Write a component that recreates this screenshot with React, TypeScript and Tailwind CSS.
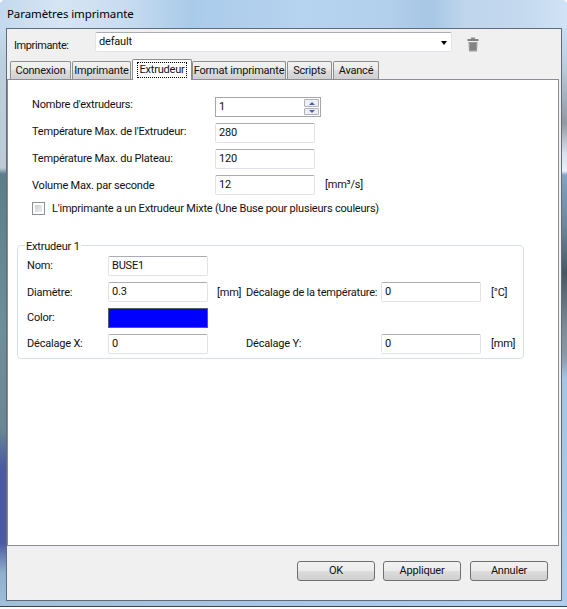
import type { ReactNode } from 'react';

const inputCls =
  'flex h-5 w-[100px] items-center rounded-[2px] border border-[#e2e3ea] border-t-[#abadb3] bg-white pl-[3px] text-[#101010]';

function Field({ value }: { value: string }) {
  return <div className={inputCls}>{value}</div>;
}

function Tab({ label, active, className }: { label: string; active?: boolean; className: string }) {
  if (active) {
    return (
      <div className={`relative z-10 -mb-px flex h-[21px] items-center justify-center whitespace-nowrap rounded-t-[2px] border border-b-0 border-[#8c8c8c] bg-white ${className}`}>
        <span className="border border-dotted border-black px-px leading-[14px]">{label}</span>
      </div>
    );
  }
  return (
    <div className={`flex h-[18px] items-center justify-center whitespace-nowrap rounded-t-[2px] border border-b-0 border-[#8e8f8f] bg-[linear-gradient(#f2f2f2,#ebebeb_45%,#dddddd_50%,#cfcfcf)] pt-px text-[#111] ${className}`}>
      {label}
    </div>
  );
}

function Row({ label, labelClass, children }: { label: string; labelClass: string; children: ReactNode }) {
  return (
    <div className="flex h-5 items-center">
      <div className={`w-[183px] ${labelClass}`}>{label}</div>
      {children}
    </div>
  );
}

function Btn({ label, className = '' }: { label: string; className?: string }) {
  return (
    <div className={`flex h-5 w-[78px] items-center justify-center rounded-[3px] border border-[#707070] bg-[linear-gradient(#f2f2f2,#ebebeb_48%,#dddddd_52%,#cfcfcf)] text-[#111] ${className}`}>
      {label}
    </div>
  );
}

export default function App() {
  return (
    <div className="flex h-[609px] w-[567px] flex-col overflow-hidden bg-white font-['Roboto',sans-serif] text-[11px] tracking-[-0.2px] text-[#111]">
      <div className="flex h-[607px] flex-col rounded-t-[5px] bg-[#a9c8e6]">
        {/* title bar */}
        <div className="flex h-[28px] items-center rounded-t-[5px] bg-[linear-gradient(90deg,#c4d9ee,#d6e5f4_60px,#c8dcf0_125px,#a9cbea_190px,#b6d3ef_300px,#b2cfec_390px,#a6c7e5_430px,#bfd6ec_465px,#c4d8ee_520px,#d0e3f6)] pl-[7px] font-['Noto_Sans',sans-serif] text-[11.5px] tracking-[-0.1px] text-black">
          Paramètres imprimante
        </div>

        <div className="flex min-h-0 flex-1">
          {/* left frame */}
          <div className="w-[6px] bg-[linear-gradient(#c6dbee,#bcd0df_30px,#bccbd6_140px,#5e7d8b_146px,#6f8e9c_300px,#6a8794_400px,#4b5aa2_440px,#4c5aa4_515px,#90b0cc_545px,#9dbcd6)]" />

          {/* client area */}
          <div className="flex w-[556px] flex-col border border-[#5f6b7a] bg-[#f0f0f0]">
            <div className="flex h-[30px] pt-[3px]">
              <div className="w-[88px] pl-[7px] pt-[6px] tracking-[-0.4px]">Imprimante:</div>
              <div className="relative flex h-5 w-[357px] items-center rounded-[2px] border border-[#e2e3ea] border-t-[#abadb3] bg-white pl-[3px]">
                default
                <div className="absolute right-[4px] top-[8px] h-0 w-0 border-x-[3.5px] border-t-[4px] border-x-transparent border-t-black" />
              </div>
              <svg className="ml-[15px] mt-[5px]" width="12" height="15" viewBox="0 0 12 15" aria-hidden="true">
                <rect x="4" y="0.5" width="4" height="1.5" fill="#8a8a8a" />
                <rect x="0.5" y="2" width="11" height="2" rx="0.5" fill="#808080" />
                <path d="M1.5 5h9l-.5 9.5H2z" fill="#9a9a9a" />
                <path d="M4 6v7M6 6v7M8 6v7" stroke="#6e6e6e" strokeWidth="1" />
              </svg>
            </div>

            {/* tabs */}
            <div className="flex h-[20px] items-end pl-[3px]">
              <Tab label="Connexion" className="w-[61px]" />
              <Tab label="Imprimante" className="ml-px w-[59px]" />
              <Tab label="Extrudeur" active className="ml-[1px] w-[60px]" />
              <Tab label="Format imprimante" className="w-[94px]" />
              <Tab label="Scripts" className="ml-px w-[45px]" />
              <Tab label="Avancé" className="ml-px w-[46px]" />
            </div>

            <div className="mr-[2px] flex h-[467px] flex-col border border-[#8c8c94] bg-white pl-[24px] pt-[17px]">
              <div className="flex flex-col gap-[6px]">
                <Row label="Nombre d'extrudeurs:" labelClass="pb-[4px]">
                  <div className="flex h-5 w-[106px] items-center justify-between border border-[#a6a6a6] pl-[3px] pr-[1px]">
                    1
                    <div className="flex h-[16px] w-[15px] flex-col gap-px">
                      <div className="flex h-[8px] items-center justify-center rounded-[1px] border border-[#b0b0b8] bg-[#eef0f4]">
                        <div className="h-0 w-0 border-x-[3px] border-b-[3px] border-x-transparent border-b-[#4f60a8]" />
                      </div>
                      <div className="flex h-[7px] items-center justify-center rounded-[1px] border border-[#b0b0b8] bg-[#eef0f4]">
                        <div className="h-0 w-0 border-x-[3px] border-t-[3px] border-x-transparent border-t-[#4f60a8]" />
                      </div>
                    </div>
                  </div>
                </Row>
                <Row label="Température Max. de l'Extrudeur:" labelClass="pb-[2px]">
                  <Field value="280" />
                </Row>
                <Row label="Température Max. du Plateau:" labelClass="">
                  <Field value="120" />
                </Row>
                <Row label="Volume Max. par seconde" labelClass="pt-[2px]">
                  <Field value="12" />
                  <div className="ml-[10px]">[mm³/s]</div>
                </Row>
              </div>

              <div className="mt-[7px] flex h-[13px] items-center gap-[7px]">
                <div className="h-[13px] w-[13px] border border-[#8e8f8f] bg-white p-[2px]">
                  <div className="h-full w-full bg-[linear-gradient(135deg,#cbcfd5,#eef0f2)]" />
                </div>
                <span className="pt-px">L'imprimante a un Extrudeur Mixte (Une Buse pour plusieurs couleurs)</span>
              </div>

              {/* extruder group */}
              <fieldset className="ml-[-15px] mt-[23px] h-[121px] w-[507px] rounded-[4px] border border-[#d9dfe6] pl-[9px]">
                <legend className="-ml-[2px] h-[14px] px-px pt-[2px] leading-[14px]">Extrudeur 1</legend>
                <div className="mt-[4px] grid grid-cols-[81px_100px_38px_135px_100px_auto] grid-rows-[20px_20px_20px_20px] items-center gap-y-[6px]">
                  <div>Nom:</div>
                  <Field value="BUSE1" />
                  <div className="col-span-4" />

                  <div className="pt-[2px]">Diamètre:</div>
                  <Field value="0.3" />
                  <div className="pl-[9px] pt-[2px]">[mm]</div>
                  <div className="whitespace-nowrap pt-[2px]">Décalage de la température:</div>
                  <Field value="0" />
                  <div className="pl-[10px] pt-[2px]">[°C]</div>

                  <div>Color:</div>
                  <div className="h-5 w-[100px] border border-[#5a5a6a] bg-[#0000ff]" />
                  <div className="col-span-4" />

                  <div>Décalage X:</div>
                  <Field value="0" />
                  <div />
                  <div>Décalage Y:</div>
                  <Field value="0" />
                  <div className="pl-[10px]">[mm]</div>
                </div>
              </fieldset>
            </div>

            <div className="flex flex-1 justify-end gap-[8px] pr-[13px] pt-[15px]">
              <Btn label="OK" />
              <Btn label="Appliquer" />
              <Btn label="Annuler" className="ml-px" />
            </div>
          </div>

          {/* right frame */}
          <div className="w-[5px] bg-[linear-gradient(#c9dff4,#b8ccdc_40px,#8f9aa3_95px,#d5e2ee_125px,#e8f0f8_143px,#7fa4c4_147px,#6c8598_200px,#465866_245px,#7b8c9a_300px,#8a9cac_330px,#a4c4e4_350px,#aecdec)]" />
        </div>

        {/* bottom frame */}
        <div className="h-[6px] border-b border-[#3c4650] bg-[linear-gradient(90deg,#a3bfd8,#a9c8e6_300px,#b0cfee)]" />
      </div>
    </div>
  );
}
